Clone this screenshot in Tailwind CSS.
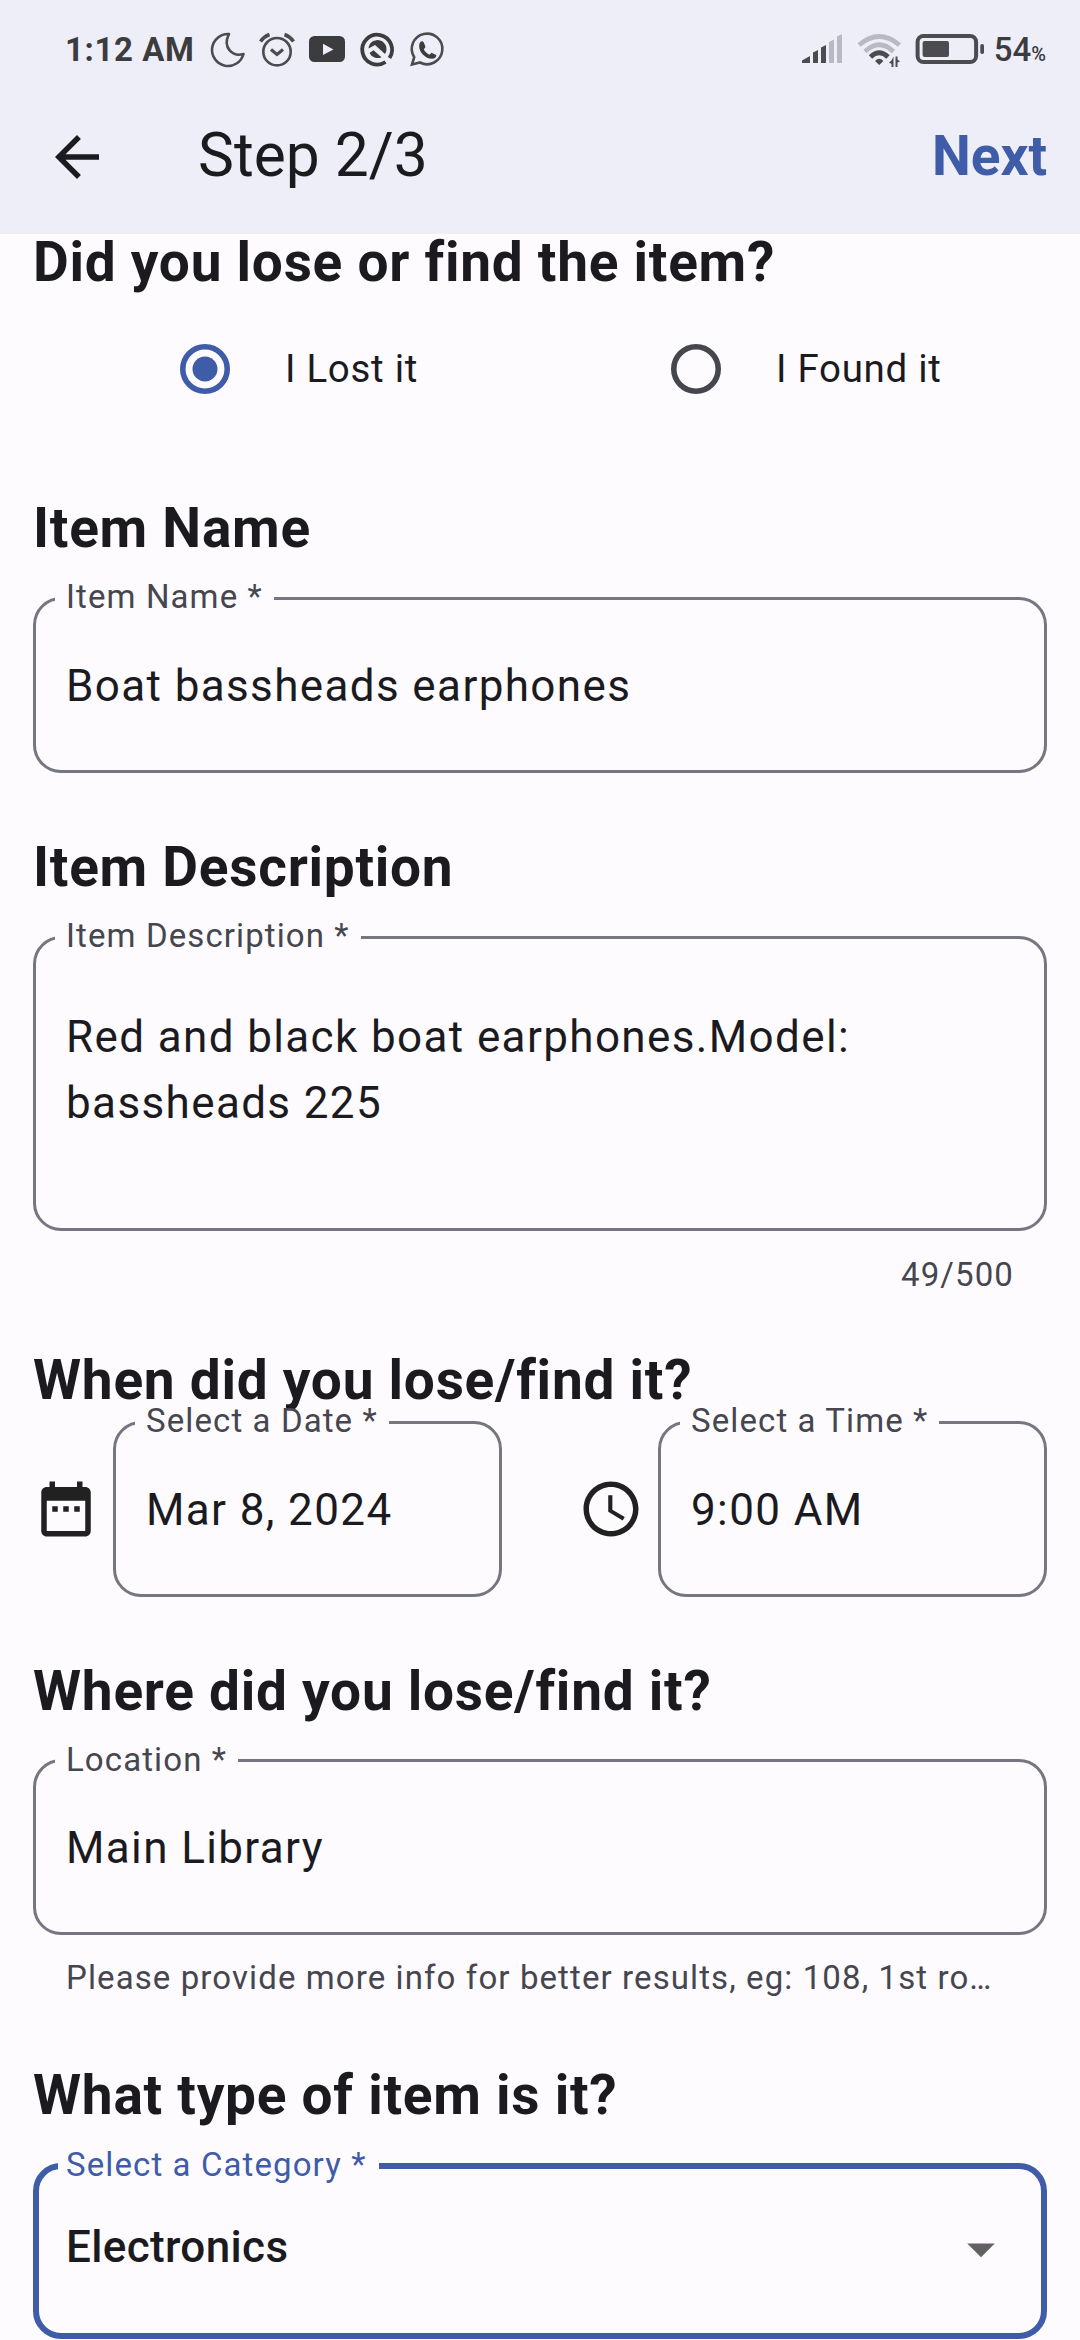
<!DOCTYPE html>
<html lang="en">
<head>
<meta charset="utf-8">
<title>Step 2/3</title>
<script src="https://cdn.jsdelivr.net/npm/@tailwindcss/browser@4"></script>
</head>
<body class="w-[1080px] h-[2340px] overflow-hidden bg-[#fefbff] font-[Roboto,sans-serif] text-[#1b1b1f]">
<header class="h-[234px] bg-[#eeeef8]">
  <!-- Status bar -->
  <div class="h-[100px] flex items-center justify-between pl-[65px] pr-[34px] text-[#3c3c3f]">
    <div class="flex items-center">
      <span class="w-[140px] text-[33px] leading-[40px] font-bold tracking-[0.6px] whitespace-nowrap">1:12 AM</span>
      <svg class="w-[250px] h-[60px]" viewBox="205 20 250 60" fill="none" stroke="#4b4b50" stroke-width="2.6">
        <path d="M229 34A16 16 0 1 0 243.500 54C233 57 222 48 229 34Z" stroke-linejoin="round"/>
        <circle cx="277" cy="51.700" r="13.700"/>
        <path d="M271 49.500l6 5 6-5" stroke-width="3.200"/>
        <path d="M260.500 41.500Q264 36.500 269.500 34.500M293.500 41.500Q290 36.500 284.500 34.500" stroke-width="3.600"/>
        <rect x="309" y="36" width="36" height="26" rx="5.500" fill="#3c3c3f" stroke="none"/>
        <path d="M323 43.700v11.300l10.400-5.600z" fill="#eeeef8" stroke="none"/>
        <path d="M385.500 62A14.900 14.900 0 1 1 389.500 58" stroke="#3c3c3f" stroke-width="3.800"/>
        <path d="M368.500 48.500A9 9 0 1 1 385 54L375 45Z M369.500 53l4-2.800 8 7a9 9 0 0 1-12-4.200Z" fill="#3c3c3f" stroke="none"/>
        <path d="M412 64.500l2.200-7.300A15.300 15.300 0 1 1 420 62.500Z"/>
        <path d="M419.500 43.500c1-2.500 3.500-3 4.500-.5l1.500 4-1.700 2.500c1.500 2.500 3 4 5.700 5.200l2-2 4.700 2.300c.5 4-5 4.500-8.500 3-4.500-2-10-8-8.200-14.500Z" fill="#3c3c3f" stroke="none"/>
      </svg>
    </div>
    <div class="flex items-center">
      <svg class="w-[192px] h-[60px]" viewBox="802 20 192 60" fill="#4b4b50">
        <path d="M802 63v-2.500l8-4.500v7zM813 63V52.500l5-2.500v13zM821 63V47.500l5-2.500v18z"/>
        <path d="M829 63V42l5-2.500v23.500zM837 63V36.500l5-2.500v29z" fill="#b9b9c3"/>
        <g fill="none" stroke="#b9b9c3" stroke-width="4.600"><path d="M859 45Q879.200 28 899.500 45M865 51.500Q879.200 38 893.500 51.500"/><path d="M870.500 57Q879.200 48.500 888 57" stroke="#4b4b50" stroke-width="4.800"/></g>
        <path d="M875 61q4.200-4.500 8.400 0l-4.200 4z"/>
        <path d="M893.500 56.500v10.500h-2v-3l-2.500-1.500 2.500-2zM895.500 56.500h2v3l2.500 2-2.500 1v4.500h-2z"/>
        <rect x="917.600" y="36" width="58.500" height="26" rx="6" fill="none" stroke="#4b4b50" stroke-width="4"/>
        <rect x="922.600" y="41" width="26.400" height="16" rx="2"/><rect x="980.300" y="44" width="3.700" height="10" rx="1.800"/>
      </svg>
      <span class="text-[33px] leading-[40px] font-medium">54</span><span class="text-[20px] leading-[20px] font-medium pt-[8px]">%</span>
    </div>
  </div>
  <!-- App bar -->
  <div class="h-[114px] flex items-center pl-[44px] pr-[33px]">
    <svg class="w-[66px] h-[66px]" viewBox="0 0 24 24" fill="#1b1b1f"><path d="M20 11H7.830l5.590-5.590L12 4l-8 8 8 8 1.410-1.410L7.830 13H20z"/></svg>
    <h1 class="ml-[88px] flex-1 pb-[4px] text-[60.5px] leading-[77px]">Step 2/3</h1>
    <button class="pb-[2px] text-[55px] leading-[77px] font-bold text-[#3f5ca9]">Next</button>
  </div>
</header>
<main class="px-[33px] -mt-[2px]">
  <h2 class="h-[60px] leading-[60px] text-[55px] font-bold tracking-[0.73px] whitespace-nowrap">Did you lose or find the item?</h2>
  <div class="flex mt-[44px] h-[66px] items-center text-[38.5px] tracking-[0.7px]">
    <label class="w-[491px] pl-[147px] flex items-center"><svg class="w-[50px] h-[50px]" viewBox="0 0 18 18"><circle cx="9" cy="9" r="8" fill="none" stroke="#3f5ca9" stroke-width="2"/><circle cx="9" cy="9" r="4.500" fill="#3f5ca9"/></svg><span class="ml-[55px]">I Lost it</span></label>
    <label class="pl-[147px] flex items-center"><svg class="w-[50px] h-[50px]" viewBox="0 0 18 18"><circle cx="9" cy="9" r="8" fill="none" stroke="#46464f" stroke-width="2"/></svg><span class="ml-[55px]">I Found it</span></label>
  </div>

  <h2 class="mt-[96px] h-[60px] leading-[60px] text-[55px] font-bold tracking-[0.73px]">Item Name</h2>
  <fieldset class="mt-[21px] h-[194px] border-[3px] border-[#767680] rounded-[28px] pl-[30px]">
    <legend class="-ml-[11px] px-[11px] h-[39px] leading-[35px] text-[33px] tracking-[1.1px] text-[#46464f]">Item Name *</legend>
    <p class="mt-[35px] text-[44px] leading-[66px] tracking-[1.375px]">Boat bassheads earphones</p>
  </fieldset>

  <h2 class="mt-[64px] h-[60px] leading-[60px] text-[55px] font-bold tracking-[0.73px]">Item Description</h2>
  <fieldset class="mt-[21px] h-[313px] border-[3px] border-[#767680] rounded-[28px] pl-[30px]">
    <legend class="-ml-[11px] px-[11px] h-[39px] leading-[35px] text-[33px] tracking-[1.1px] text-[#46464f]">Item Description *</legend>
    <p class="mt-[47px] text-[44px] leading-[66px] tracking-[1.375px]">Red and black boat earphones.Model:<br>bassheads 225</p>
  </fieldset>
  <div class="mt-[24px] h-[40px] leading-[40px] pr-[33px] text-right text-[33px] tracking-[1.1px] text-[#46464f]">49/500</div>

  <h2 class="mt-[55px] h-[60px] leading-[60px] text-[55px] font-bold tracking-[0.73px]">When did you lose/find it?</h2>
  <div class="flex justify-between -mt-[7px]">
    <div class="flex w-[469px]">
      <svg class="w-[66px] h-[66px] mt-[73px] mr-[14px]" viewBox="0 0 24 24" fill="#212121"><path d="M9 11H7v2h2v-2zm4 0h-2v2h2v-2zm4 0h-2v2h2v-2zm2-7h-1V2h-2v2H8V2H6v2H5c-1.110 0-1.990.9-1.990 2L3 20c0 1.100.890 2 2 2h14c1.100 0 2-.9 2-2V6c0-1.100-.9-2-2-2zm0 16H5V9h14v11z"/></svg>
      <fieldset class="flex-1 h-[194px] border-[3px] border-[#767680] rounded-[28px] pl-[30px]">
        <legend class="-ml-[11px] px-[11px] h-[39px] leading-[35px] text-[33px] tracking-[1.1px] text-[#46464f]">Select a Date *</legend>
        <p class="mt-[35px] text-[44px] leading-[66px] tracking-[1.375px]">Mar 8, 2024</p>
      </fieldset>
    </div>
    <div class="flex w-[469px]">
      <svg class="w-[66px] h-[66px] mt-[73px] mr-[14px]" viewBox="0 0 24 24" fill="#212121"><path d="M11.990 2C6.470 2 2 6.480 2 12s4.470 10 9.990 10C17.520 22 22 17.520 22 12S17.520 2 11.990 2zM12 20c-4.420 0-8-3.580-8-8s3.580-8 8-8 8 3.580 8 8-3.580 8-8 8zm.5-13H11v6l5.250 3.150.75-1.230-4.500-2.670z"/></svg>
      <fieldset class="flex-1 h-[194px] border-[3px] border-[#767680] rounded-[28px] pl-[30px]">
        <legend class="-ml-[11px] px-[11px] h-[39px] leading-[35px] text-[33px] tracking-[1.1px] text-[#46464f]">Select a Time *</legend>
        <p class="mt-[35px] text-[44px] leading-[66px] tracking-[1.375px]">9:00 AM</p>
      </fieldset>
    </div>
  </div>

  <h2 class="mt-[64px] h-[60px] leading-[60px] text-[55px] font-bold tracking-[0.73px]">Where did you lose/find it?</h2>
  <fieldset class="mt-[20px] h-[194px] border-[3px] border-[#767680] rounded-[28px] pl-[30px]">
    <legend class="-ml-[11px] px-[11px] h-[39px] leading-[37px] text-[33px] tracking-[1.1px] text-[#46464f]">Location *</legend>
    <p class="mt-[35px] text-[44px] leading-[66px] tracking-[1.375px]">Main Library</p>
  </fieldset>
  <p class="mt-[23px] h-[40px] leading-[40px] px-[33px] text-[33px] tracking-[1.1px] whitespace-nowrap text-[#46464f]">Please provide more info for better results, eg: 108, 1st ro…</p>

  <h2 class="mt-[67px] h-[60px] leading-[60px] text-[55px] font-bold tracking-[0.73px]">What type of item is it?</h2>
  <fieldset class="mt-[21px] h-[193px] border-[6px] border-[#3f5ca9] rounded-[28px] pl-[27px] pr-[27px]">
    <legend class="-ml-[8px] pl-[8px] pr-[13px] h-[40px] leading-[37px] text-[33px] tracking-[1.1px] text-[#3f5ca9]">Select a Category *</legend>
    <div class="mt-[28px] flex items-start justify-between">
      <span class="text-[44px] leading-[66px] font-medium tracking-[0.35px]">Electronics</span>
      <svg class="w-[66px] h-[66px] mt-[2px]" viewBox="0 0 24 24" fill="#616161"><path d="M7 10l5 5 5-5z"/></svg>
    </div>
  </fieldset>
</main>
</body>
</html>
